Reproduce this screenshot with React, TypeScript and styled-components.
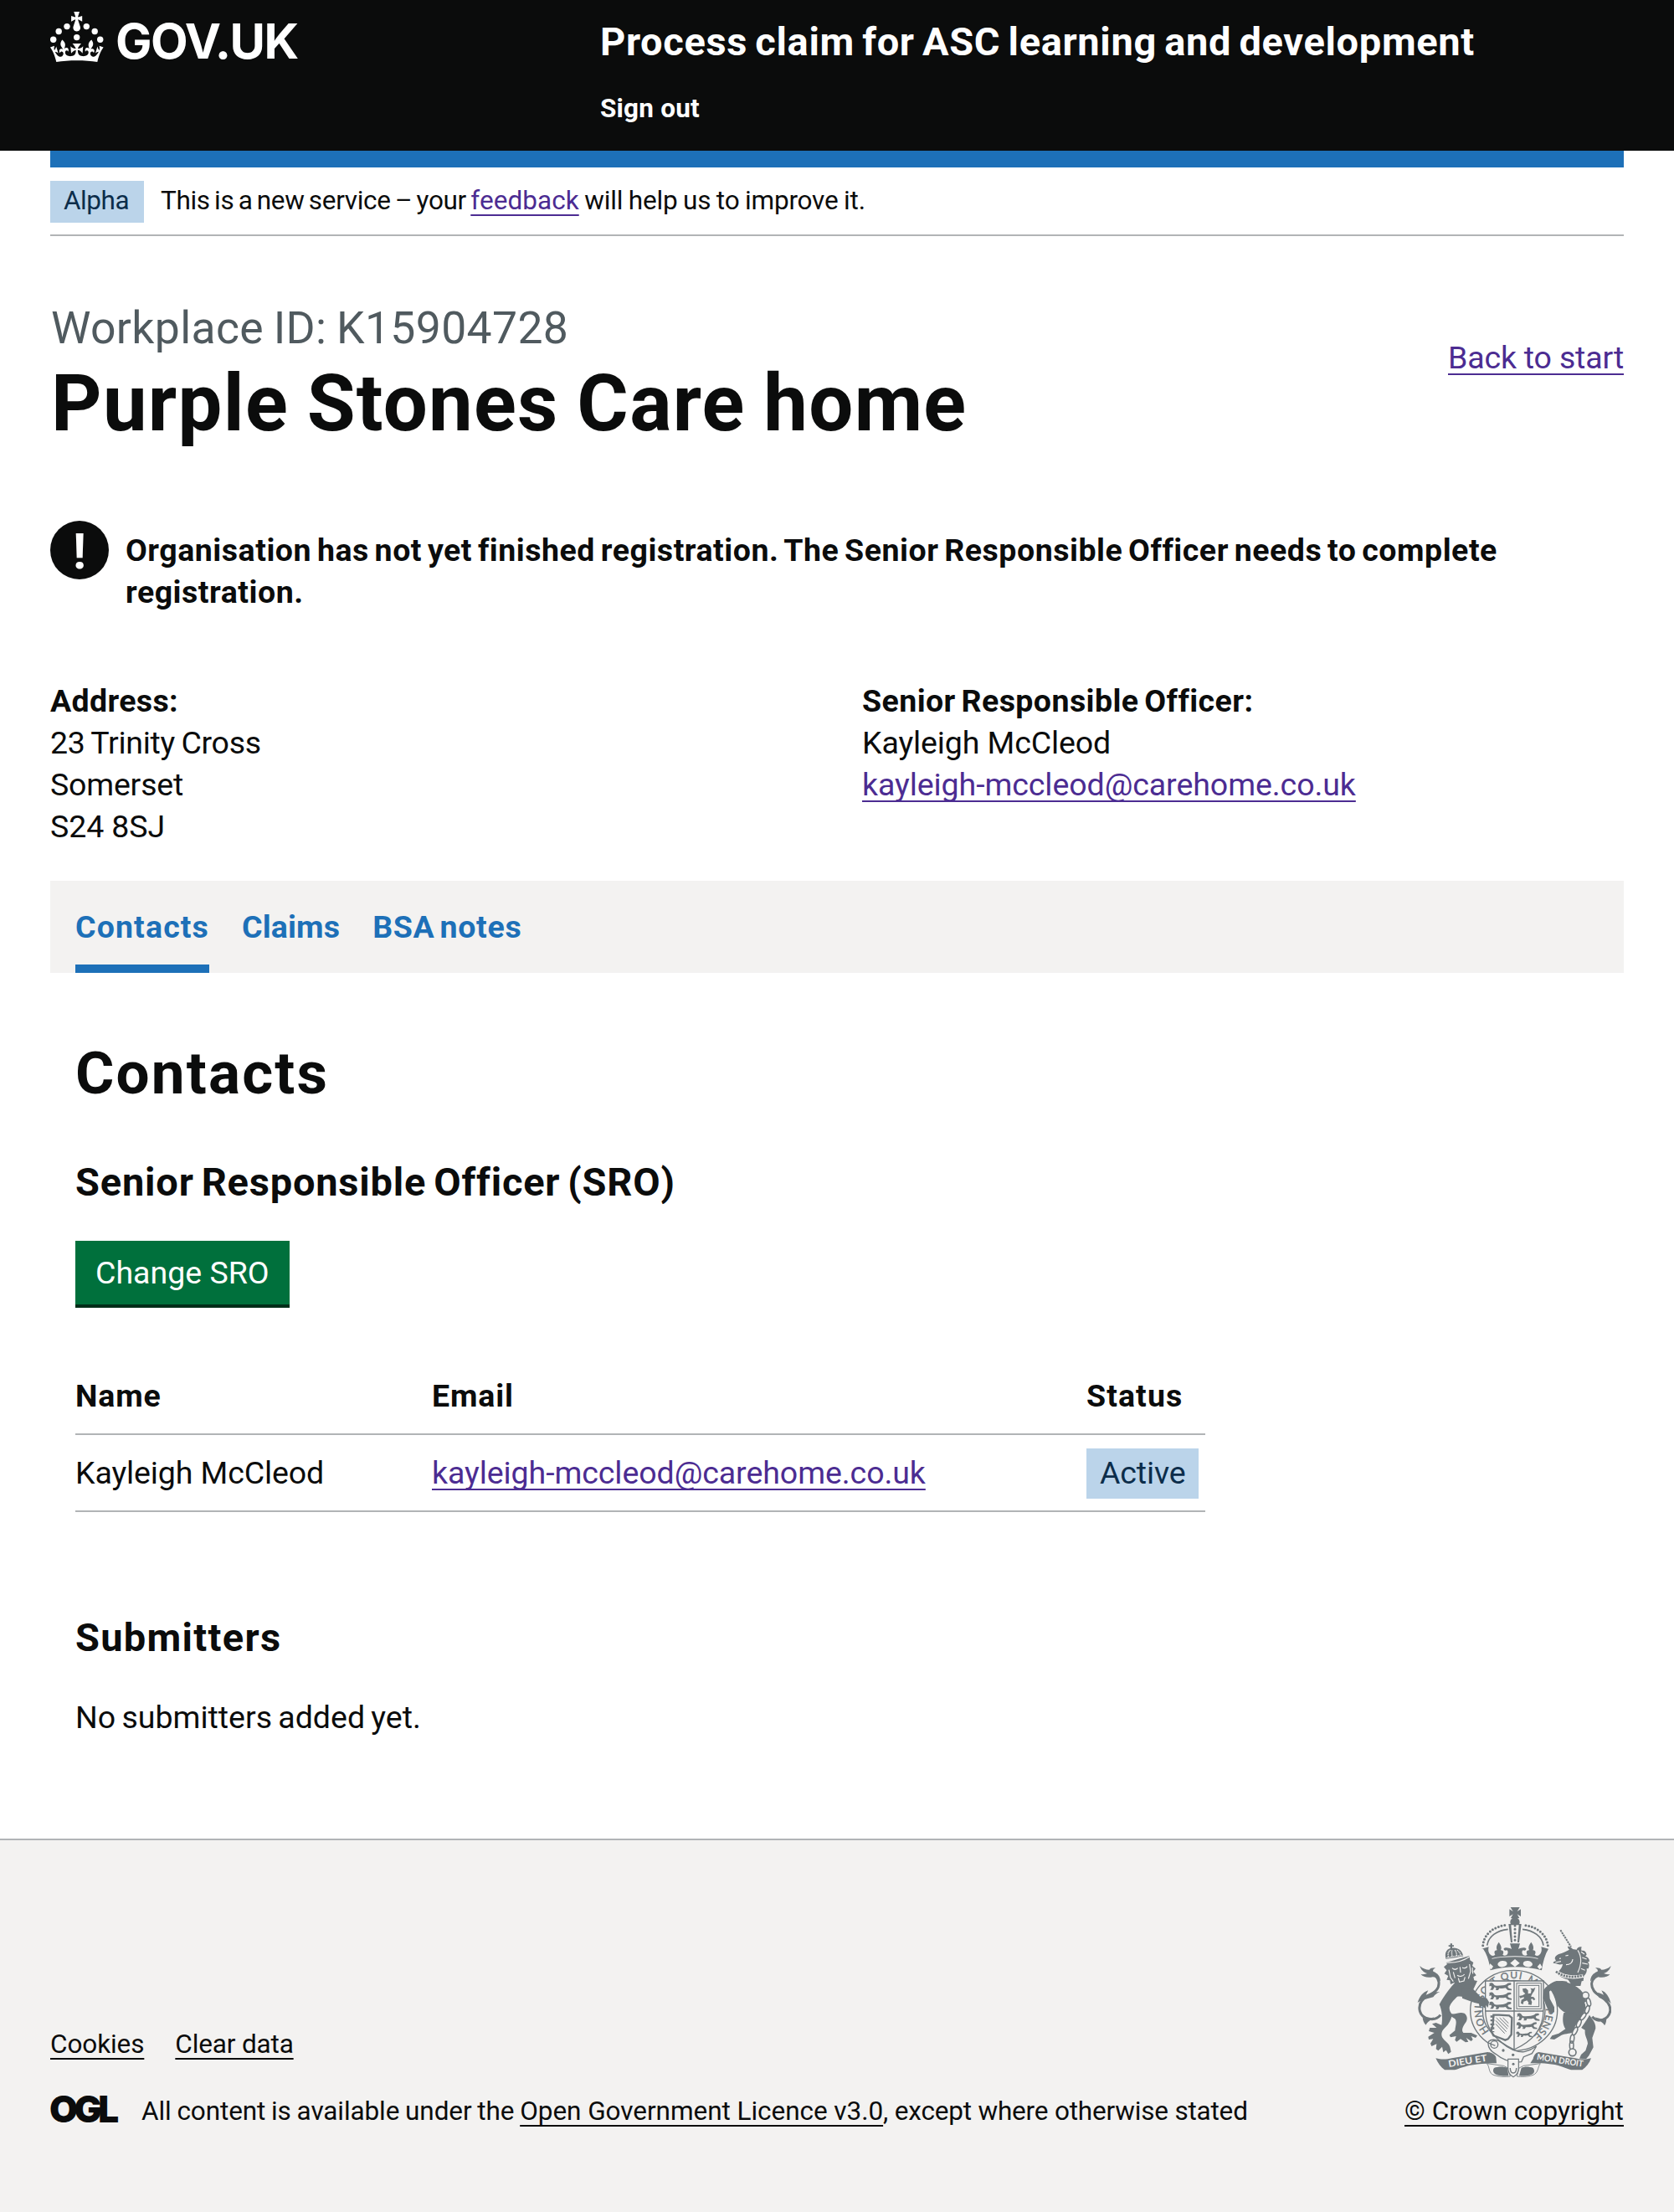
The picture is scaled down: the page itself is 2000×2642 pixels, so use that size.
import React from "react";
import styled, { createGlobalStyle, css } from "styled-components";

const ink = "#0b0c0c";
const blue = "#1d70b8";
const visited = "#4c2c92";
const grey = "#f3f2f1";
const rule = "#b1b4b6";
const crestInk = "#6f777b";

const GlobalStyle = createGlobalStyle`
  *, *::before, *::after { box-sizing: border-box; }
  body {
    margin: 0;
    background: #fff;
    color: ${ink};
    font-family: Roboto, "Liberation Sans", sans-serif;
    font-size: 37.5px;
    line-height: 50px;
  }
  h1, h2, h3, p { margin: 0; }
`;

type Fit = { $ls?: number; $ws?: number };
const fit = css<Fit>`
  letter-spacing: ${(p) => p.$ls ?? 0}px;
  word-spacing: ${(p) => p.$ws ?? 0}px;
`;

const Span = styled.span<Fit>`
  ${fit}
`;

const Link = styled.a<Fit & { $visited?: boolean }>`
  ${fit}
  color: ${(p) => (p.$visited ? visited : ink)};
  text-decoration: underline;
  text-decoration-thickness: 2px;
  text-underline-offset: 6px;
  text-decoration-skip-ink: none;
  white-space: nowrap;
`;

const Page = styled.div`
  width: 2000px;
  min-height: 2642px;
  display: flex;
  flex-direction: column;
`;

const Header = styled.header`
  height: 180px;
  padding: 14px 60px 0;
  background: ${ink};
  color: #fff;
  display: grid;
  grid-template-columns: 657px 1fr;
`;

const Logo = styled.div`
  display: flex;
  gap: 14px;
  height: 60px;
`;

const Wordmark = styled.span`
  font-family: Inter, sans-serif;
  font-weight: 700;
  font-size: 58px;
  line-height: 60px;
  letter-spacing: -1.6px;
  padding-top: 5px;
`;

const ServiceName = styled.div<Fit>`
  ${fit}
  font-size: 47px;
  line-height: 60px;
  font-weight: 700;
  margin-top: 6px;
`;

const SignOut = styled.div<Fit>`
  ${fit}
  font-size: 31.5px;
  line-height: 40px;
  font-weight: 700;
  margin-top: 30px;
`;

const Main = styled.main`
  padding: 0 60px;
`;

const BlueBar = styled.div`
  height: 20px;
  background: ${blue};
`;

const Phase = styled.div`
  display: flex;
  gap: 20px;
  padding: 16px 0 14px;
  border-bottom: 2px solid ${rule};
  font-size: 31.5px;
  line-height: 48px;
`;

const PhaseText = styled.div`
  height: 50px;
  white-space: nowrap;
`;

const Tag = styled.strong<Fit & { $large?: boolean }>`
  ${fit}
  font-weight: 400;
  color: #0c2d4a;
  background: #bbd4ea;
  width: ${(p) => (p.$large ? 134 : 112)}px;
  height: ${(p) => (p.$large ? 60 : 50)}px;
  padding: ${(p) => (p.$large ? "4px 0 0 16px" : "0 0 0 16px")};
`;

const TitleRow = styled.div`
  display: flex;
  justify-content: space-between;
  padding-top: 80px;
`;

const Caption = styled.div<Fit>`
  ${fit}
  font-size: 53.5px;
  line-height: 60px;
  color: #505a5f;
  padding-left: 1px;
`;

const Title = styled.h1<Fit>`
  ${fit}
  font-size: 94px;
  line-height: 100px;
  margin-top: 10px;
  padding-left: 1px;
`;

const Back = styled.div`
  padding-top: 40px;
`;

const Warning = styled.div`
  display: flex;
  gap: 20px;
  margin-top: 90px;
`;

const WarningIcon = styled.span`
  width: 70px;
  height: 70px;
  flex: none;
  border-radius: 50%;
  background: ${ink};
  color: #fff;
  font-size: 59px;
  font-weight: 700;
  line-height: 73px;
  text-align: center;
`;

const WarningText = styled.p<Fit>`
  ${fit}
  width: 1700px;
  padding-top: 10px;
  font-weight: 700;
`;

const Details = styled.div`
  display: grid;
  grid-template-columns: 1fr 1fr;
  column-gap: 60px;
  margin-top: 80px;
`;

const Lines = styled.div`
  display: flex;
  flex-direction: column;
  align-items: flex-start;
`;

const Label = styled.strong<Fit>`
  ${fit}
`;

const Tabs = styled.nav`
  display: flex;
  gap: 39px;
  height: 110px;
  margin-top: 40px;
  padding: 0 30px;
  background: ${grey};
`;

const Tab = styled.a<Fit & { $current?: boolean }>`
  ${fit}
  padding-top: 30px;
  color: ${blue};
  font-weight: 700;
  border-bottom: 10px solid ${(p) => (p.$current ? blue : "transparent")};
`;

const Section = styled.section`
  padding: 0 30px;
`;

const H2 = styled.h2<Fit>`
  ${fit}
  font-size: 71px;
  line-height: 80px;
  margin-top: 80px;
`;

const H3 = styled.h3<Fit & { $top: number }>`
  ${fit}
  font-size: 47px;
  line-height: 60px;
  margin-top: ${(p) => p.$top}px;
`;

const Button = styled.button<Fit>`
  ${fit}
  display: block;
  width: 256px;
  height: 76px;
  margin-top: 40px;
  padding: 0 0 0 24px;
  border: 0;
  text-align: left;
  font-family: inherit;
  font-size: 37.5px;
  line-height: 76px;
  color: #fff;
  background: #00703c;
  box-shadow: 0 4px 0 #002d18;
`;

const Table = styled.div`
  width: 1350px;
  margin-top: 84px;
`;

const Row = styled.div<{ $head?: boolean }>`
  display: grid;
  grid-template-columns: 426px 782px 1fr;
  align-items: start;
  border-bottom: 2px solid ${rule};
  padding: ${(p) => (p.$head ? "0 0 20px" : "16px 0 14px")};
  font-weight: ${(p) => (p.$head ? 700 : 400)};
`;

const Cell = styled.div`
  padding-top: 4px;
`;

const Para = styled.p<Fit>`
  ${fit}
  margin-top: 40px;
`;

const Footer = styled.footer`
  flex: 1;
  display: flex;
  justify-content: space-between;
  margin-top: 120px;
  padding: 80px 60px 0;
  border-top: 2px solid ${rule};
  background: ${grey};
  font-size: 31.5px;
  line-height: 40px;
`;

const FooterMain = styled.div`
  padding-top: 144px;
`;

const FooterLinks = styled.div`
  display: flex;
  gap: 37px;
`;

const Licence = styled.div`
  display: flex;
  margin-top: 40px;
`;

const Ogl = styled.span`
  width: 110px;
  margin-left: -1px;
  font-family: Inter, sans-serif;
  font-weight: 900;
  font-size: 44px;
  line-height: 34px;
  letter-spacing: -4.5px;
`;

const Copyright = styled.div`
  display: flex;
  flex-direction: column;
  align-items: center;
  gap: 20px;
`;

const Crown = () => (
  <svg width="64" height="60" viewBox="0 0 64 60" fill="#fff" aria-hidden="true">
    <circle cx="20" cy="17.6" r="3.7" />
    <circle cx="10.2" cy="23.5" r="3.7" />
    <circle cx="3.7" cy="33.2" r="3.7" />
    <circle cx="31.7" cy="30.6" r="3.7" />
    <circle cx="43.3" cy="17.6" r="3.7" />
    <circle cx="53.2" cy="23.5" r="3.7" />
    <circle cx="59.7" cy="33.2" r="3.7" />
    <path d="M33.1,9.8c.2-.1.3-.3.5-.5l4.6,2.4v-6.8l-4.6,1.5c-.1-.2-.3-.3-.5-.5l1.9-5.9h-6.7l1.9,5.9c-.2.1-.3.3-.5.5l-4.6-1.5v6.8l4.6-2.4c.1.2.3.3.5.5l-2.6,8c-.9,2.8,1.2,5.7,4.1,5.7h0c3,0,5.1-2.9,4.1-5.7l-2.6-8ZM37,37.9s-3.4,3.8-4.1,6.1c2.2,0,4.2-.5,6.4-2.8l-.7,8.5c-2-2.8-4.4-4.1-5.7-3.8.1,3.1.5,6.7,5.8,7.2,3.7.3,6.7-1.5,7-3.8.4-2.6-2-4.3-3.7-1.6-1.4-4.5,2.4-6.1,4.9-3.2-1.9-4.5-1.8-7.7,2.4-10.9,3,4,2.6,7.3-1.2,11.1,2.4-1.3,6.2,0,4,4.6-1.2-2.8-3.7-2.2-4.2.2-.3,1.7.7,3.7,3,4.2,1.9.3,4.7-.9,7-5.9-1.3,0-2.4.7-3.9,1.7l2.4-8c.6,2.3,1.4,3.7,2.2,4.5.6-1.6.5-2.8,0-5.3l5,1.8c-2.6,3.6-5.2,8.7-7.3,17.5-7.4-1.1-15.7-1.7-24.5-1.7h0c-8.8,0-17.1.6-24.5,1.7-2.1-8.9-4.7-13.9-7.3-17.5l5-1.8c-.5,2.5-.6,3.7,0,5.3.8-.8,1.6-2.3,2.2-4.5l2.4,8c-1.5-1-2.6-1.7-3.9-1.7,2.3,5,5.2,6.2,7,5.9,2.3-.4,3.3-2.4,3-4.2-.5-2.4-3-3.1-4.2-.2-2.2-4.6,1.6-6,4-4.6-3.7-3.7-4.2-7.1-1.2-11.1,4.2,3.2,4.3,6.4,2.4,10.9,2.5-2.8,6.3-1.3,4.9,3.2-1.8-2.7-4.1-1-3.7,1.6.3,2.3,3.3,4.1,7,3.8,5.4-.5,5.7-4.2,5.8-7.2-1.3-.2-3.7,1-5.7,3.8l-.7-8.5c2.2,2.3,4.2,2.7,6.4,2.8-.7-2.3-4.1-6.1-4.1-6.1h10.6,0Z" />
  </svg>
);

/* One walking lion, about 82 units wide, used in rows on the shield. */
const Lion = ({ x, y, s = 1 }: { x: number; y: number; s?: number }) => (
  <path
    transform={`translate(${x} ${y}) scale(${s})`}
    d="M2 2c5-4 13-3 15 2l4 5c9 3 20 1 30 0 8-1 13-4 17-8l10-1c4 3 3 7-1 8-5 0-8 2-9 6l4 5 10 3v5l-14-1-8-8c-8 2-15 2-22 1l-4 7h-9l2-7-6-4-6 10H5l5-8-1-6-8 1 2-5z"
  />
);

const ChainLink = ({ x, y, r }: { x: number; y: number; r: number }) => (
  <ellipse cx={x} cy={y} rx="7" ry="15" transform={`rotate(${r} ${x} ${y})`} fill="none" strokeWidth="4.5" />
);

/* Letters of the garter motto, each with its angle round the ring. */
const garterMotto: [string, number][] = [
  ["H", -123], ["O", -109], ["N", -95], ["I", -84], ["S", -68], ["O", -55],
  ["T", -34], ["Q", -15], ["U", 0], ["I", 11], ["M", 32],
  ["P", 91], ["E", 102], ["N", 114], ["S", 126], ["E", 137],
];

const Crest = () => (
  <svg width="232" height="204" viewBox="102 54 696 612" fill={crestInk} stroke="none" aria-hidden="true">
    {/* royal crown */}
    <path d="M437 54h33l-9 15 13-8v26l-13-8 8 14h-31l8-14-13 8V61l13 8z" />
    <circle cx="453" cy="107" r="17" />
    <path d="M430 114h46l-8 66h-30z" />
    <path d="M439 118h28l-5 62h-18z" fill={grey} />
    <path d="M453 120v54" stroke={crestInk} strokeWidth="9" strokeLinecap="round" strokeDasharray="0 13" fill="none" />
    <g fill="none" stroke={crestInk}>
      <path d="M338 191C342 150 376 123 422 118M571 191C566 150 530 123 485 118" strokeWidth="9" strokeLinecap="round" strokeDasharray="0 11.5" />
      <path d="M353 191C358 158 388 137 428 133M555 191C550 158 520 137 480 133" strokeWidth="5" />
    </g>
    <path d="M333 203l26-7c-3 12-1 20 5 27 5 6 12 6 18 1-5-9-3-15 7-16-5-10-1-19 6-29 7 10 12 19 7 29 10 1 12 7 7 16 5 5 13 4 17-2 3-6 2-11-2-14-8 3-12-1-11-6 6-6 20-2 28 2l-6-20h36l-6 20c8-4 22-8 28-2 1 5-3 9-11 6-4 3-5 8-2 14 4 6 12 7 17 2-5-9-3-15 7-16-5-10-1-19 7-29 7 10 11 19 6 29 10 1 12 7 7 16 6 5 13 5 18-1 6-7 8-15 5-27l26 7c-12 20-20 46-24 77-60-16-128-16-184 0-4-31-12-57-26-77z" />
    <g fill={grey}>
      <ellipse cx="408" cy="257" rx="17" ry="11" transform="rotate(-8 408 257)" />
      <ellipse cx="499" cy="257" rx="17" ry="11" transform="rotate(8 499 257)" />
      <path d="M453 240l17 14-17 14-17-14zM364 256l11 10-7 11-10-8zM543 256l8 13-10 8-8-10z" />
      <path d="M370 237c22-5 50-8 83-8s61 3 83 8l-1 2c-22-5-50-7-82-7s-60 2-82 7z" />
    </g>

    {/* lion supporter */}
    <path d="M186 440c-20 26-66 16-74-14-6-26 8-44 32-56 24-12 38-24 36-48-2-16-14-26-32-32" fill="none" stroke={crestInk} strokeWidth="9" />
    <path d="M112 264c10 10 22 14 34 14 4-6 12-8 22-7-8 5-10 9-8 13 16 6 26 18 26 36-8-10-16-16-28-16-18 4-34 0-42-10 8 1 16 0 22-3-12-4-22-12-26-27zM104 396c8-24 20-38 38-44l-8 16c14-6 32-12 50-10-12 4-18 10-24 18l-30 8c-14 4-20 8-26 12zM122 446c4 8 14 10 26 6l16-4c-10 10-26 16-30 28-8-8-12-18-12-30z" />
    <path d="M240 326c24-10 54-14 78-8l-14 30 28 30 20 2 8 16-4 18-8-10-2 12-12-8-8 4-2-12-16-4c-16-10-34-26-62-22-14 14-26 26-28 40 0 10 4 16 8 22 16 2 28-8 46-2 12 10 12 24 2 36-8 12-14 24-6 34l28 0 22 10-6 8-16-6 6 12-6 6-18-12 8 14-10 2-18-12-14 10-6-6 4-14-20 4-4-8 20-16c2-18 8-32 0-42l-12-8c-4 14-10 26-22 38-10 10-18 20-12 36 8 14 22 18 28 34l4 18-10 8-8-14-10 8-4-20-14 14-8-6 2-18-18 8-4-10 10-16-16 2-2-10 22-14-20-6 4-12 24 0-16-14 14-4 20 8c4-22 2-52-8-74 16-30 40-62 62-84z" />
    <path d="M206 252l84-24 2 16 12 8-4 12 12 10-8 10 10 14-10 6 4 16-14-2-2 16-14-6-10 14-14-8-14 6-4-16-14 6-2-14-12-2 6-14-14-8 8-12-10-12 12-10z" />
    <g fill="none" stroke={grey} strokeWidth="3.5">
      <path d="M206 252c28 2 62-6 86-22M228 272c6 6 14 6 20 0M264 270c6 4 14 2 18-4M256 268l2 20M246 298c8 6 20 4 26-4M250 308l4 14 16-4 4-14M290 258l4 26-8 26M216 278l6 28 10 14M232 286l6 22M300 270l2 22" />
    </g>
    <path d="M206 240c-8-24 4-40 22-40 20-2 36 8 40 30-20 2-42 6-62 10z" />
    <path d="M214 232c-2-12 0-20 8-24M228 230c-2-10-2-18 0-24M244 228c0-10-2-16-8-22M258 225c-2-8-6-14-14-18M208 236c20-6 40-8 60-9" fill="none" stroke={grey} strokeWidth="4" strokeDasharray="4 2" />
    <path d="M221 184h7v6h6v5h-6v6h-7v-6h-6v-5h6z" />

    {/* unicorn supporter */}
    <path d="M616 136l38 60" fill="none" stroke={crestInk} strokeWidth="6" strokeDasharray="7 2.5" />
    <path d="M642 194c8 0 14 4 18 10l14 2c2-8 10-12 18-10-2 6-2 10 0 14 10-2 16 4 18 14-2 2-4 4-4 6 8 2 14 8 14 18l-6 2c6 6 6 16 2 24l-6 0c2 10-2 20-10 26l-2 18c-8 2-16 2-24 0-26-2-54-8-72-28 10-8 20-18 22-32-8 2-16 2-24-2l-10-2c0-4 4-6 10-8l-4-8c0-8 6-12 14-16 14-4 26-10 38-16-4-4-6-8-6-12z" />
    <g fill="none" stroke={grey} strokeWidth="3.5">
      <path d="M634 228l10-2M612 238l6-1M598 252l20-4M678 208c14 22 14 50 0 80M690 214l12 8M694 234l16 6M694 254l20 4M690 274l14 6M660 240c0 12-10 20-24 20" />
      <path d="M602 286c24 18 58 22 96 14" strokeWidth="13" />
    </g>
    <path d="M600 284c24 20 60 24 98 14" fill="none" stroke={crestInk} strokeWidth="8" strokeDasharray="7 3" />
    <path d="M640 308c18 6 36 6 54 2l-6 26-30 0z" />
    <path d="M556 352c14-16 26-28 46-34 36 2 70 10 96 44 16 24 8 46 16 66 8 22 30 34 28 60l-12 34 4 34-16 30-10 12-24-2 6-14 16-14 8-26c-2-20-12-26-10-48-12-6-22-12-30-26-6-12-10-28-24-32-22-2-36-16-50-36-12-14-28-16-42-14l4 24 10 22 24 14 2 12-14-2-14-12-16-34z" />
    <path d="M628 432c16-2 34 0 46 8l4 22-10 36c-14 10-32 8-48 14l-26 16-16-2 8-12 24-8 24-16c-10-14-12-38-6-58z" />
    <path d="M730 446c20 26 58 10 64-18 4-26-14-42-34-54-20-12-34-26-32-48 2-16 14-26 34-32" fill="none" stroke={crestInk} strokeWidth="9" />
    <path d="M797 264c-10 10-22 14-34 14-4-6-12-8-22-7 8 5 10 9 8 13-16 6-26 18-26 36 8-10 16-16 28-16 18 4 34 0 42-10-8 1-16 0-22-3 12-4 22-12 26-27zM797 400c-6-26-18-42-34-48l8 16c-12-6-24-10-36-8 10 4 14 10 20 18l22 8c10 4 16 8 20 14zM780 446c-4 8-14 10-24 6l-18-4c10 10 30 16 36 30 6-10 8-20 6-32z" />
    <path d="M712 390c12 24 0 46-18 72-20 24-34 60-36 96" fill="none" stroke={grey} strokeWidth="22" />
    <g stroke={crestInk}>
      <circle cx="706" cy="370" r="12" fill={grey} strokeWidth="4.5" />
      <ChainLink x={717} y={394} r={-14} />
      <ChainLink x={712} y={421} r={18} />
      <ChainLink x={697} y={445} r={38} />
      <ChainLink x={682} y={470} r={22} />
      <ChainLink x={668} y={498} r={28} />
      <ChainLink x={658} y={526} r={8} />
      <ChainLink x={656} y={549} r={0} />
      <circle cx="659" cy="574" r="13" fill={grey} strokeWidth="5" />
    </g>

    {/* garter with its motto */}
    <ellipse cx="449" cy="424" rx="156" ry="144" fill={grey} stroke={crestInk} strokeWidth="4" />
    <ellipse cx="449" cy="426" rx="112" ry="110" fill="none" stroke={crestInk} strokeWidth="4" />
    <g fontFamily="Lato, sans-serif" fontSize="36" textAnchor="middle" stroke={crestInk} strokeWidth="1">
      {garterMotto.map(([letter, angle]) => (
        <text key={angle} transform={`translate(449 425) rotate(${angle}) translate(0 -115)`}>
          {letter}
        </text>
      ))}
    </g>

    {/* shield */}
    <path d="M347 318h208v104c0 70-40 112-105 142-65-30-103-72-103-142z" fill={grey} stroke={crestInk} strokeWidth="4" />
    <path d="M347 426h208M450 318v246" stroke={crestInk} strokeWidth="4" />
    <Lion x={359} y={325} />
    <Lion x={359} y={359} />
    <Lion x={359} y={393} />
    <g fill="none" stroke={crestInk}>
      <rect x="459" y="326" width="88" height="92" strokeWidth="3" />
      <rect x="467" y="334" width="72" height="76" strokeWidth="3" />
    </g>
    <path d="M480 346l12-2 8 8 0 12 10-2 2-12-4-6 10 2 8-4-4 12-6 8-6 12 10 2 6 8-6 4-4-6-6 2 4 10-2 10-12-2 2-6-6-8-12 4-2 10-8-4 2-12 10-6-2-4-12 4-4-8 12-2 10-6-8-8z" />
    <path d="M376 440h20l36 2 10 8-2 60-12 16-10 4-20-8-22-8-8-16 6-26z" fill="none" stroke={crestInk} strokeWidth="7" />
    <path d="M372 442v60" fill="none" stroke={crestInk} strokeWidth="14" strokeDasharray="7 7" />
    <path d="M386 450l40 40M384 460l38 40M384 472l32 34M398 450l32 32M410 450l20 20" stroke={crestInk} strokeWidth="3" />
    <Lion x={459} y={434} />
    <Lion x={457} y={466} s={0.92} />
    <Lion x={456} y={500} s={0.72} />

    {/* forelegs resting on the shield */}
    <path d="M262 346c34-8 54 12 66 28l24 6 8 14-4 20-8-10-2 12-12-8-8 4-2-12-16-4-44-16z" />
    <path d="M640 346c-30-8-52 2-64 10l2 26 16 30 0 18-14 4-12-20-14-34 2-30c20-26 50-36 84-30z" />

    {/* buckle and strap */}
    <path d="M358 536c10-12 36-8 48 4 26 22 50 34 80 32 16-4 30-10 44-20l-16 26-30 12-8 18c-34 4-66-6-92-28-18-10-30-26-26-44z" fill={grey} stroke={crestInk} strokeWidth="4" />
    <circle cx="379" cy="546" r="13" fill="none" stroke={crestInk} strokeWidth="4" />
    <path d="M358 540l24 10" stroke={crestInk} strokeWidth="4" />
    <circle cx="411" cy="567" r="5" />
    <circle cx="446" cy="583" r="5" />

    {/* scroll */}
    <path d="M169 595c22 6 40 4 58 0l128-22c12 2 26 8 30 18l2 22c-22 0-54 0-84 6-30 4-50 14-66 18l-36 0c-14-10-24-24-32-42z" />
    <path d="M726 595c-22 6-40 4-58 0l-130-22c-12 2-18 14-20 24l-10 16c36 0 68 0 100 8 20 6 34 12 46 16l40 0c14-10 26-24 32-42z" />
    <path d="M352 614c12 12 4 34 26 42 20 6 40 6 58 4l-8-30-16-8zM544 614c-10 12-6 34-28 42-20 6-40 6-56 4l8-30 16-8z" fill={grey} stroke={crestInk} strokeWidth="2.5" />
    <path d="M378 630c14-6 36-6 48 0l4 28c-20 2-42 0-52-10-4-6-4-12 0-18zM518 630c-14-6-32-6-42 0l-8 28c20 2 42 0 52-10 4-6 2-12-2-18z" />
    <path d="M428 598h38v30c0 20-10 30-19 34-9-4-19-14-19-34z" fill={grey} stroke={crestInk} strokeWidth="3.5" />
    <path d="M436 630c0 24 22 24 22 0" fill="none" stroke={crestInk} strokeWidth="4" />
    <circle cx="447" cy="616" r="4.5" />
    <g fill={grey} fontFamily="Lato, sans-serif" fontWeight="700" fontSize="33">
      <text transform="translate(216 627) rotate(-9)" textLength="140" lengthAdjust="spacingAndGlyphs">
        DIEU ET
      </text>
      <text transform="translate(530 600) rotate(9)" fontSize="31" textLength="168" lengthAdjust="spacingAndGlyphs">
        MON DROIT
      </text>
    </g>
  </svg>
);

export default function App() {
  return (
    <>
      <GlobalStyle />
      <Page>
        <Header>
          <Logo>
            <Crown />
            <Wordmark>GOV.UK</Wordmark>
          </Logo>
          <div>
            <ServiceName $ls={0.65} $ws={-3}>Process claim for ASC learning and development</ServiceName>
            <SignOut $ls={0.19}>Sign out</SignOut>
          </div>
        </Header>
        <Main>
          <BlueBar />
          <Phase>
            <Tag $ls={-0.44}>Alpha</Tag>
            <PhaseText>
              <Span $ls={-0.32} $ws={-2.2}>This is a new service – your </Span>
              <Link $visited $ls={0.05}>feedback</Link>
              <Span $ls={-0.2} $ws={-1}> will help us to improve it.</Span>
            </PhaseText>
          </Phase>
          <TitleRow>
            <div>
              <Caption $ls={0.35} $ws={-2}>Workplace ID: K15904728</Caption>
              <Title $ls={1.3} $ws={-3}>Purple Stones Care home</Title>
            </div>
            <Back>
              <Link $visited $ls={-0.17}>Back to start</Link>
            </Back>
          </TitleRow>
          <Warning>
            <WarningIcon>!</WarningIcon>
            <WarningText $ls={0.52} $ws={-3}>
              Organisation has not yet finished registration. The Senior Responsible Officer needs to complete
              registration.
            </WarningText>
          </Warning>
          <Details>
            <Lines>
              <Label $ls={0.35}>Address:</Label>
              <Span $ls={-0.3} $ws={-1.5}>23 Trinity Cross</Span>
              <Span $ls={-0.2}>Somerset</Span>
              <Span $ls={-0.1}>S24 8SJ</Span>
            </Lines>
            <Lines>
              <Label $ls={0.43} $ws={-3}>Senior Responsible Officer:</Label>
              <Span $ls={-0.11}>Kayleigh McCleod</Span>
              <Link $visited $ls={-0.07}>kayleigh-mccleod@carehome.co.uk</Link>
            </Lines>
          </Details>
          <Tabs>
            <Tab $current $ls={1.13}>Contacts</Tab>
            <Tab $ls={0.15}>Claims</Tab>
            <Tab $ls={0.7} $ws={-4}>BSA notes</Tab>
          </Tabs>
          <Section>
            <H2 $ls={2.16}>Contacts</H2>
            <H3 $top={60} $ls={0.8} $ws={-3.5}>Senior Responsible Officer (SRO)</H3>
            <Button>Change SRO</Button>
            <Table>
              <Row $head>
                <Span $ls={0.83}>Name</Span>
                <Span $ls={0.86}>Email</Span>
                <Span $ls={1.09}>Status</Span>
              </Row>
              <Row>
                <Cell><Span $ls={-0.11}>Kayleigh McCleod</Span></Cell>
                <Cell><Link $visited $ls={-0.07}>kayleigh-mccleod@carehome.co.uk</Link></Cell>
                <Tag $large $ls={-0.15}>Active</Tag>
              </Row>
            </Table>
            <H3 $top={120} $ls={1.3}>Submitters</H3>
            <Para $ls={0} $ws={-2}>No submitters added yet.</Para>
          </Section>
        </Main>
        <Footer>
          <FooterMain>
            <FooterLinks>
              <Link $ls={-0.1}>Cookies</Link>
              <Link $ls={-0.15}>Clear data</Link>
            </FooterLinks>
            <Licence>
              <Ogl>OGL</Ogl>
              <div>
                <Span $ls={-0.1} $ws={-0.9}>All content is available under the </Span>
                <Link $ls={-0.05}>Open Government Licence v3.0</Link>
                <Span $ls={-0.19}>, except where otherwise stated</Span>
              </div>
            </Licence>
          </FooterMain>
          <Copyright>
            <Crest />
            <Link $ls={0.07}>© Crown copyright</Link>
          </Copyright>
        </Footer>
      </Page>
    </>
  );
}
